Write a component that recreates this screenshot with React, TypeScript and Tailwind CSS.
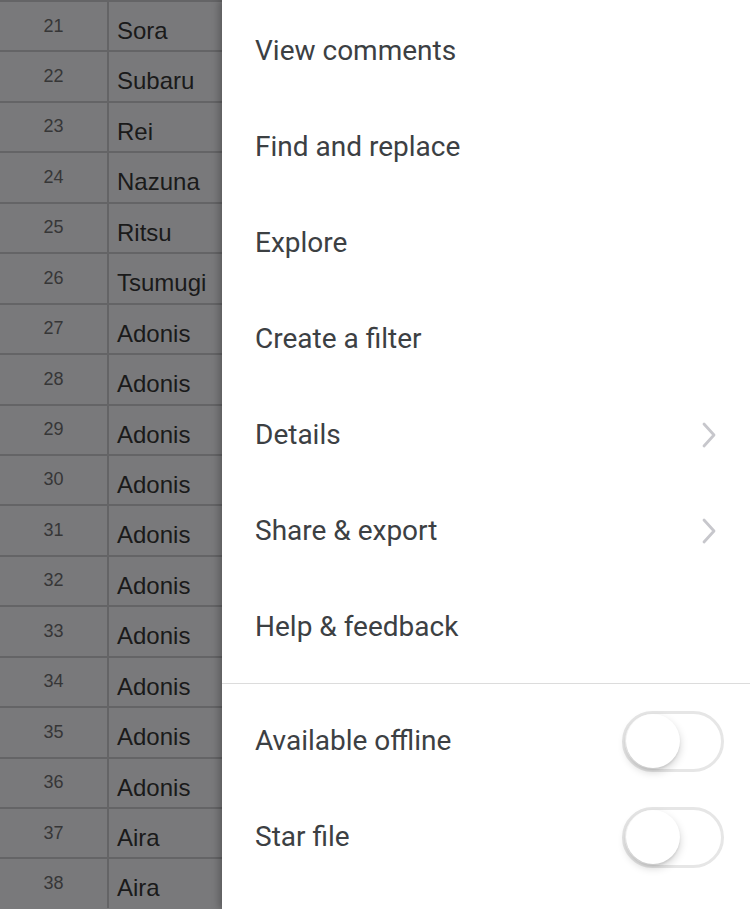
import React from "react";

const rows: [number, string][] = [
  [21, "Sora"],
  [22, "Subaru"],
  [23, "Rei"],
  [24, "Nazuna"],
  [25, "Ritsu"],
  [26, "Tsumugi"],
  [27, "Adonis"],
  [28, "Adonis"],
  [29, "Adonis"],
  [30, "Adonis"],
  [31, "Adonis"],
  [32, "Adonis"],
  [33, "Adonis"],
  [34, "Adonis"],
  [35, "Adonis"],
  [36, "Adonis"],
  [37, "Aira"],
  [38, "Aira"],
];

const items: { label: string; chevron?: boolean }[] = [
  { label: "View comments" },
  { label: "Find and replace" },
  { label: "Explore" },
  { label: "Create a filter" },
  { label: "Details", chevron: true },
  { label: "Share & export", chevron: true },
  { label: "Help & feedback" },
];

function Chevron() {
  return (
    <svg width="14" height="26" viewBox="0 0 14 26" fill="none">
      <polyline
        points="2,2 12,13 2,24"
        stroke="#c7c7cc"
        strokeWidth="2.8"
        strokeLinecap="round"
        strokeLinejoin="round"
      />
    </svg>
  );
}

function Toggle() {
  return (
    <div className="relative w-[102px] h-[61px] rounded-full border-[3px] border-[#e6e6e6] bg-white">
      <div className="absolute left-[1px] top-[0px] w-[54px] h-[54px] rounded-full bg-white shadow-[0_4px_8px_rgba(0,0,0,0.18),0_2px_2px_rgba(0,0,0,0.08)]" />
    </div>
  );
}

export default function App() {
  return (
    <div className="w-[750px] h-[909px] overflow-hidden flex bg-white">
      <div className="w-[222px] shrink-0 bg-[#79797b] overflow-hidden [font-family:'Liberation_Sans',Arial,sans-serif]">
        {rows.map(([n, name]) => (
          <div key={n} className="flex h-[50.44px] border-t-2 border-[#646466]">
            <div className="w-[107px] shrink-0 text-center text-[18px] leading-none pt-[14.5px] text-[#363637]">
              {n}
            </div>
            <div className="w-[2px] shrink-0 bg-[#646466]" />
            <div className="flex-1 pl-[8px] text-[24px] leading-none pt-[17px] text-[#1a1a1a] whitespace-nowrap">
              {name}
            </div>
          </div>
        ))}
      </div>
      <div className="relative flex-1 bg-white shadow-[-3px_0_7px_rgba(0,0,0,0.25)] pt-[3px] [font-family:Roboto,'Noto_Sans',sans-serif] text-[28px] text-[#3c4043]">
        {items.map((it) => (
          <div key={it.label} className="h-[96px] flex items-center pl-[33px] pr-[34px]">
            <span className="flex-1 leading-none">{it.label}</span>
            {it.chevron && <Chevron />}
          </div>
        ))}
        <div className="mt-[8px] mb-[9px] h-px bg-[#dcdcdc]" />
        {["Available offline", "Star file"].map((l) => (
          <div key={l} className="h-[96px] flex items-center pl-[33px] pr-[26px]">
            <span className="flex-1 leading-none">{l}</span>
            <Toggle />
          </div>
        ))}
      </div>
    </div>
  );
}
